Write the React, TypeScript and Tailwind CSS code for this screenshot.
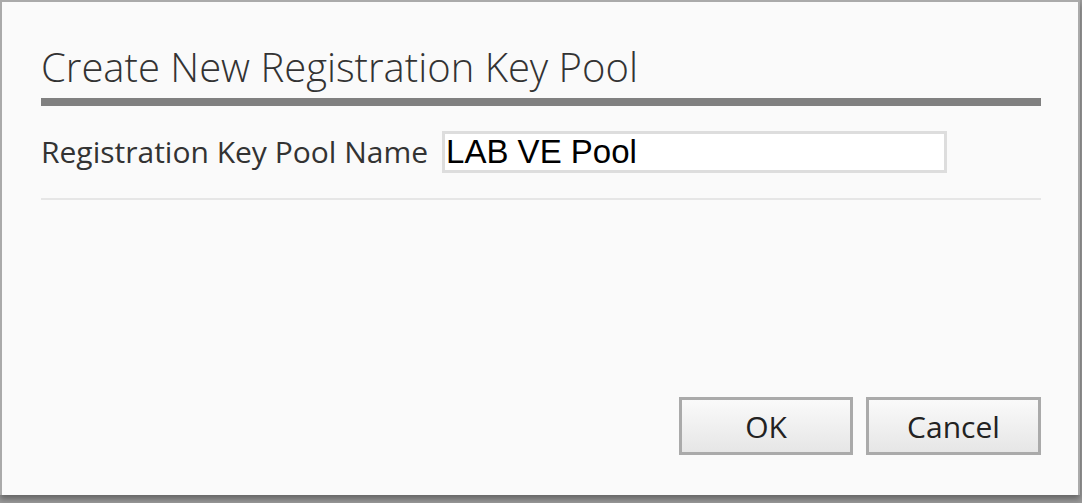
import React from 'react';

const App: React.FC = () => {
  return (
    <div className="w-[1082px] h-[503px] bg-[#9a9a9a] overflow-hidden" style={{ fontFamily: '"Open Sans", sans-serif' }}>
      <div className="w-[1080px] h-[495px] bg-[#fafafa] border-t-2 border-l-2 border-r-2 border-[#aaaaaa] shadow-[0_4px_6px_rgba(0,0,0,0.35)] flex flex-col pl-[39px] pr-[37px]">
        <h1 className="mt-[40px] text-[40px] leading-[50px] font-light text-[#333333]">
          Create New Registration Key Pool
        </h1>
        <div className="mt-[6px] h-[8px] bg-[#808080]" />

        <div className="mt-[25px] flex items-center h-[42px]">
          <label className="text-[30px] text-[#333333] leading-none">Registration Key Pool Name</label>
          <input
            type="text"
            defaultValue="LAB VE Pool"
            className="ml-[14px] w-[505px] h-[42px] bg-white border-[3px] border-[#dddddd] px-[1px] text-[33px] text-black outline-none"
            style={{ fontFamily: '"Liberation Sans", Arial, sans-serif' }}
          />
        </div>

        <div className="mt-[25px] h-[2px] bg-[#e6e6e6]" />

        <div className="mt-auto mb-[40px] flex justify-end gap-[13px]">
          <button className="w-[174px] h-[58px] border-[3px] border-[#aaaaaa] bg-gradient-to-b from-[#fafafa] to-[#e6e6e6] text-[30px] text-[#222222]">
            OK
          </button>
          <button className="w-[175px] h-[58px] border-[3px] border-[#aaaaaa] bg-gradient-to-b from-[#fafafa] to-[#e6e6e6] text-[30px] text-[#222222]">
            Cancel
          </button>
        </div>
      </div>
    </div>
  );
};

export default App;
